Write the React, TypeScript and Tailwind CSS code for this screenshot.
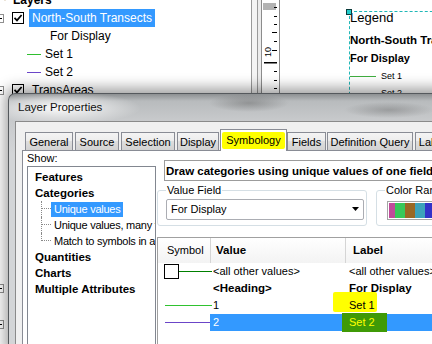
import React from "react";

const Check = () => (
  <div className="w-[12px] h-[12px] border border-black bg-white flex items-center justify-center shrink-0">
    <svg width="10" height="10" viewBox="0 0 10 10">
      <path d="M1.5 4.8 L4 7.4 L8.6 2" stroke="black" strokeWidth="1.7" fill="none" />
    </svg>
  </div>
);

const Minus = () => (
  <div className="w-[9px] h-[9px] border border-[#8f8f8f] bg-white flex items-center justify-center shrink-0">
    <div className="w-[5px] h-[1px] bg-black" />
  </div>
);

function TocRow({ children }: { children?: React.ReactNode }) {
  return <div className="h-[18px] flex items-center whitespace-nowrap">{children}</div>;
}

function Tab({ label, w, ml }: { label: string; w: string; ml: string }) {
  return (
    <div
      className={`${w} ${ml} h-[18px] shrink-0 border border-b-0 border-[#898c95] bg-[linear-gradient(to_bottom,#f4f4f4_0%,#ececec_50%,#dedede_50%,#d2d2d2_100%)] flex items-center justify-center text-[11px] leading-[16px] whitespace-nowrap overflow-hidden`}
    >
      {label}
    </div>
  );
}

export default function App() {
  const emptyRows = Array.from({ length: 13 }, (_, i) => i + 6);
  return (
    <div className="relative w-[432px] h-[344px] overflow-hidden bg-white font-['Liberation_Sans',Arial,sans-serif] text-black">
      {/* Background ArcMap window */}
      <div className="flex h-[344px]">
        {/* Table of contents */}
        <div className="w-[251px] shrink-0 text-[12px] overflow-hidden">
          <div className="-mt-[9px] flex flex-col">
            <TocRow>
              <svg width="10" height="10" viewBox="0 0 10 10" className="shrink-0 -mt-[6px]">
                <path d="M0 5 L5 2 L10 5 L5 8 Z" fill="#e8b04a" stroke="#8a5a10" strokeWidth="0.8" />
              </svg>
              <span className="ml-[3px] font-bold">Layers</span>
            </TocRow>
            <TocRow>
              <div className="w-[12px] shrink-0">
                <div className="-ml-[5px]">
                  <Minus />
                </div>
              </div>
              <Check />
              <span className="ml-[5px] bg-[#3399ff] text-white px-[3px] h-[18px] leading-[18px]">
                North-South Transects
              </span>
            </TocRow>
            <TocRow>
              <span className="ml-[50px]">For Display</span>
            </TocRow>
            <TocRow>
              <div className="ml-[27px] w-[14px] h-[1px] bg-[#2fbf2f]" />
              <span className="ml-[4px]">Set 1</span>
            </TocRow>
            <TocRow>
              <div className="ml-[27px] w-[14px] h-[1px] bg-[#6b45c8]" />
              <span className="ml-[4px]">Set 2</span>
            </TocRow>
            <TocRow>
              <div className="w-[12px] shrink-0">
                <div className="-ml-[5px]">
                  <Minus />
                </div>
              </div>
              <Check />
              <span className="ml-[8px]">TransAreas</span>
            </TocRow>
            {emptyRows.map((i) => (
              <TocRow key={i}>
                {(i === 16 || i === 18) && (
                  <div className="-ml-[5px]">
                    <Minus />
                  </div>
                )}
              </TocRow>
            ))}
          </div>
        </div>
        <div className="w-[1px] shrink-0 bg-[#9a9a9a]" />
        <div className="w-[5px] shrink-0 bg-[#f4f4f4]" />
        <div className="w-[1px] shrink-0 bg-[#9a9a9a]" />
        <div className="w-[3px] shrink-0 bg-[#ececec]" />
        {/* Vertical ruler */}
        <div className="w-[19px] shrink-0 border-x border-[#8c8c8c] bg-white">
          <svg width="17" height="344" viewBox="0 0 17 344">
            <rect x="1" y="3" width="13" height="7" fill="#b3b3b3" />
            {[7, 16, 24, 41, 71, 80, 88].map((y) => (
              <rect key={y} x="12" y={y} width="3" height="1" fill="#000" />
            ))}
            {[32, 50].map((y) => (
              <rect key={y} x="10" y={y} width="5" height="1" fill="#000" />
            ))}
            <rect x="2" y="62" width="13" height="1.5" fill="#000" />
            <text
              x="6"
              y="52"
              transform="rotate(-90 6 52)"
              fontSize="9"
              textAnchor="middle"
              dominantBaseline="central"
              fontFamily="Liberation Sans, Arial, sans-serif"
              fill="#000"
            >
              10
            </text>
          </svg>
        </div>
        {/* Layout page */}
        <div className="flex-1 bg-white">
          <div className="relative ml-[69px] mt-[11px] w-[200px] h-[200px] border-l border-t border-dashed border-[#1fb7b7]">
            <div className="absolute -left-[4px] -top-[3px] w-[6px] h-[6px] bg-[#22cccc] border border-[#0b3b3b]" />
            <div className="h-[11px] leading-[11px] text-[13px] whitespace-nowrap">Legend</div>
            <div className="mt-[11px] h-[13px] leading-[13px] text-[11.5px] font-bold whitespace-nowrap">
              North-South Transects
            </div>
            <div className="mt-[5px] h-[12px] leading-[12px] text-[11px] font-bold whitespace-nowrap">For Display</div>
            <div className="mt-[6px] h-[12px] flex items-center">
              <div className="w-[26px] h-[1px] bg-[#3fae3f]" />
              <span className="ml-[5px] text-[9px] leading-[12px]">Set 1</span>
            </div>
            <div className="mt-[5px] h-[12px] flex items-center">
              <div className="w-[26px] h-[1px] bg-[#6b45c8]" />
              <span className="ml-[5px] text-[9px] leading-[12px]">Set 2</span>
            </div>
          </div>
        </div>
      </div>

      {/* Layer Properties dialog */}
      <div className="absolute left-[8px] top-[93px] w-[440px] h-[260px] rounded-tl-[7px] border-l border-t border-[#55595d] shadow-[0_-2px_14px_3px_rgba(0,0,0,0.38)] bg-[image:radial-gradient(ellipse_80px_16px_at_52px_14px,rgba(255,255,255,0.95),rgba(255,255,255,0)_100%),radial-gradient(ellipse_40px_9px_at_240px_9px,rgba(70,70,70,0.35),rgba(70,70,70,0)_100%),radial-gradient(ellipse_45px_8px_at_380px_16px,rgba(70,70,70,0.3),rgba(70,70,70,0)_100%),linear-gradient(to_bottom,#8d9092_0px,#b8bbbd_7px,#c8cacc_27px,#d3d5d7_60px)]">
        <div className="h-[27px] flex items-center pl-[9px] text-[11.5px] text-[#111]">Layer Properties</div>
        <div className="ml-[6px] h-[240px] border-l border-t border-[#8a8a8a] bg-[#f0f0f0] pt-[7px]">
          {/* Tab strip */}
          <div className="h-[21px] flex items-end pl-[9px]">
            <Tab label="General" w="w-[48px]" ml="ml-0" />
            <Tab label="Source" w="w-[44px]" ml="ml-[2px]" />
            <Tab label="Selection" w="w-[54px]" ml="ml-[2px]" />
            <Tab label="Display" w="w-[42px]" ml="ml-[2px]" />
            <div className="relative z-10 ml-[1px] w-[67px] h-[22px] -mb-[1px] shrink-0 border border-b-0 border-[#898c95] bg-white flex items-center justify-center pb-[2px]">
              <div className="absolute left-[1px] top-[2px] w-[63px] h-[17px] bg-[#ffff00] rounded-[2px]" />
              <span className="relative text-[11px] leading-[16px]">Symbology</span>
            </div>
            <Tab label="Fields" w="w-[39px]" ml="ml-0" />
            <Tab label="Definition Query" w="w-[86px]" ml="ml-[1px]" />
            <Tab label="Labels" w="w-[40px]" ml="ml-[2px]" />
          </div>
          {/* Tab page */}
          <div className="ml-[6px] h-[200px] border border-[#898c95] bg-white flex pl-[4px] gap-[1px]">
            {/* Show list */}
            <div className="w-[129px] shrink-0 flex flex-col">
              <div className="h-[15px] leading-[15px] text-[11px]">Show:</div>
              <div className="h-[190px] border border-[#828790] bg-white pt-[2px] overflow-hidden">
                <div className="h-[16px] leading-[16px] pl-[7px] text-[11.5px] font-bold">Features</div>
                <div className="h-[16px] leading-[16px] pl-[7px] text-[11.5px] font-bold">Categories</div>
                <div className="h-[16px] flex items-stretch">
                  <div className="ml-[13px] w-[10px] shrink-0 border-l border-dotted border-[#8a8a8a]">
                    <div className="h-[8px] border-b border-dotted border-[#8a8a8a]" />
                  </div>
                  <span className="self-center h-[15px] leading-[15px] px-[3px] bg-[#3399ff] text-white text-[11px] tracking-[-0.25px] whitespace-nowrap">
                    Unique values
                  </span>
                </div>
                <div className="h-[16px] flex items-stretch">
                  <div className="ml-[13px] w-[10px] shrink-0 border-l border-dotted border-[#8a8a8a]">
                    <div className="h-[8px] border-b border-dotted border-[#8a8a8a]" />
                  </div>
                  <span className="self-center pl-[3px] text-[11px] leading-[15px] tracking-[-0.25px] whitespace-nowrap">
                    Unique values, many fields
                  </span>
                </div>
                <div className="h-[16px] flex items-start">
                  <div className="ml-[13px] w-[10px] h-[8px] shrink-0 border-l border-b border-dotted border-[#8a8a8a]" />
                  <span className="self-center pl-[3px] text-[11px] leading-[15px] tracking-[-0.25px] whitespace-nowrap">
                    Match to symbols in a style
                  </span>
                </div>
                <div className="h-[16px] leading-[16px] pl-[7px] text-[11.5px] font-bold">Quantities</div>
                <div className="h-[16px] leading-[16px] pl-[7px] text-[11.5px] font-bold">Charts</div>
                <div className="h-[16px] leading-[16px] pl-[7px] text-[11.5px] font-bold whitespace-nowrap">Multiple Attributes</div>
              </div>
            </div>
            {/* Right side */}
            <div className="w-[300px] shrink-0 flex flex-col">
              <div className="ml-[7px] mt-[9px] w-[290px] h-[22px] border border-[#9c9c9c] pl-[1px] text-[11.5px] font-bold leading-[20px] whitespace-nowrap overflow-hidden">
                Draw categories using unique values of one field.
              </div>
              <div className="mt-[9px] flex gap-[9px]">
                <div className="relative w-[210px] h-[36px] shrink-0 border border-[#d5dfe5] rounded-[3px]">
                  <span className="absolute left-[8px] -top-[8px] px-[1px] bg-white text-[11px] leading-[14px]">Value Field</span>
                  <div className="ml-[8px] mt-[8px] w-[198px] h-[21px] border border-[#abadb3] rounded-[2px] bg-white flex items-center justify-between pl-[4px] pr-[4px]">
                    <span className="text-[11px] leading-[14px]">For Display</span>
                    <svg width="7" height="4" viewBox="0 0 7 4">
                      <path d="M0 0 H7 L3.5 4 Z" fill="#000" />
                    </svg>
                  </div>
                </div>
                <div className="relative w-[100px] h-[36px] shrink-0 border border-[#d5dfe5] rounded-[3px]">
                  <span className="absolute left-[8px] -top-[8px] px-[1px] bg-white text-[11px] leading-[14px] whitespace-nowrap">Color Ramp</span>
                  <div className="ml-[10px] mt-[10px] w-[80px] h-[19px] border border-[#a5a5a5] bg-white p-[1px] flex">
                    <div className="w-[6px] bg-[#c04a9a]" />
                    <div className="w-[10px] bg-[#37c85a]" />
                    <div className="w-[10px] bg-[#9a6824]" />
                    <div className="w-[10px] bg-[#3ca2ba]" />
                    <div className="w-[10px] bg-[#3232c8]" />
                    <div className="w-[10px] bg-[#7a3ab8]" />
                  </div>
                </div>
              </div>
              {/* Symbol table */}
              <div className="mt-[11px] w-[290px] h-[120px] border-l border-t border-[#a0a0a0] bg-white">
                <div className="h-[25px] flex bg-[linear-gradient(to_bottom,#ffffff,#f3f3f3)]">
                  <div className="w-[52px] shrink-0 pl-[9px] text-[11px] leading-[25px]">Symbol</div>
                  <div className="w-[1px] shrink-0 bg-[#d5d5d5]" />
                  <div className="w-[134px] shrink-0 pl-[5px] text-[11.5px] font-bold leading-[25px]">Value</div>
                  <div className="w-[1px] shrink-0 bg-[#d5d5d5]" />
                  <div className="flex-1 pl-[7px] text-[11.5px] font-bold leading-[25px]">Label</div>
                </div>
                {/* Row 1 */}
                <div className="h-[17px] flex text-[11px] leading-[17px]">
                  <div className="w-[52px] shrink-0 flex items-center pl-[6px]">
                    <div className="w-[15px] h-[15px] shrink-0 border border-black bg-white" />
                    <div className="w-[33px] h-[1px] shrink-0 bg-[#008000]" />
                  </div>
                  <div className="w-[135px] shrink-0 pl-[3px] whitespace-nowrap">&lt;all other values&gt;</div>
                  <div className="flex-1 pl-[4px] whitespace-nowrap">&lt;all other values&gt;</div>
                </div>
                {/* Row 2 */}
                <div className="h-[17px] flex text-[11.5px] font-bold leading-[17px]">
                  <div className="w-[52px] shrink-0" />
                  <div className="w-[135px] shrink-0 pl-[3px] whitespace-nowrap">&lt;Heading&gt;</div>
                  <div className="flex-1 pl-[4px] whitespace-nowrap">For Display</div>
                </div>
                {/* Row 3 */}
                <div className="h-[17px] flex text-[11px] leading-[17px]">
                  <div className="w-[52px] shrink-0 flex items-center pl-[7px]">
                    <div className="w-[47px] h-[1px] shrink-0 bg-[#2fc22f]" />
                  </div>
                  <div className="w-[135px] shrink-0 pl-[3px]">1</div>
                  <div className="relative flex-1 pl-[4px]">
                    <div className="absolute -left-[12px] -top-[5px] w-[44px] h-[20px] bg-[#ffff00] rounded-[2px]" />
                    <span className="relative">Set 1</span>
                  </div>
                </div>
                {/* Row 4 */}
                <div className="h-[17px] flex text-[11px] leading-[17px]">
                  <div className="w-[52px] shrink-0 flex items-center pl-[7px]">
                    <div className="w-[45px] h-[1px] shrink-0 bg-[#6b45c8]" />
                  </div>
                  <div className="w-[135px] shrink-0 pl-[3px] bg-[#3399ff] text-white">2</div>
                  <div className="relative flex-1 pl-[4px] bg-[#3399ff]">
                    <div className="absolute -left-[3px] -top-[1px] w-[45px] h-[19px] bg-[#3f9a06]" />
                    <span className="relative text-[#ffff00]">Set 2</span>
                  </div>
                </div>
              </div>
            </div>
          </div>
        </div>
      </div>
    </div>
  );
}
